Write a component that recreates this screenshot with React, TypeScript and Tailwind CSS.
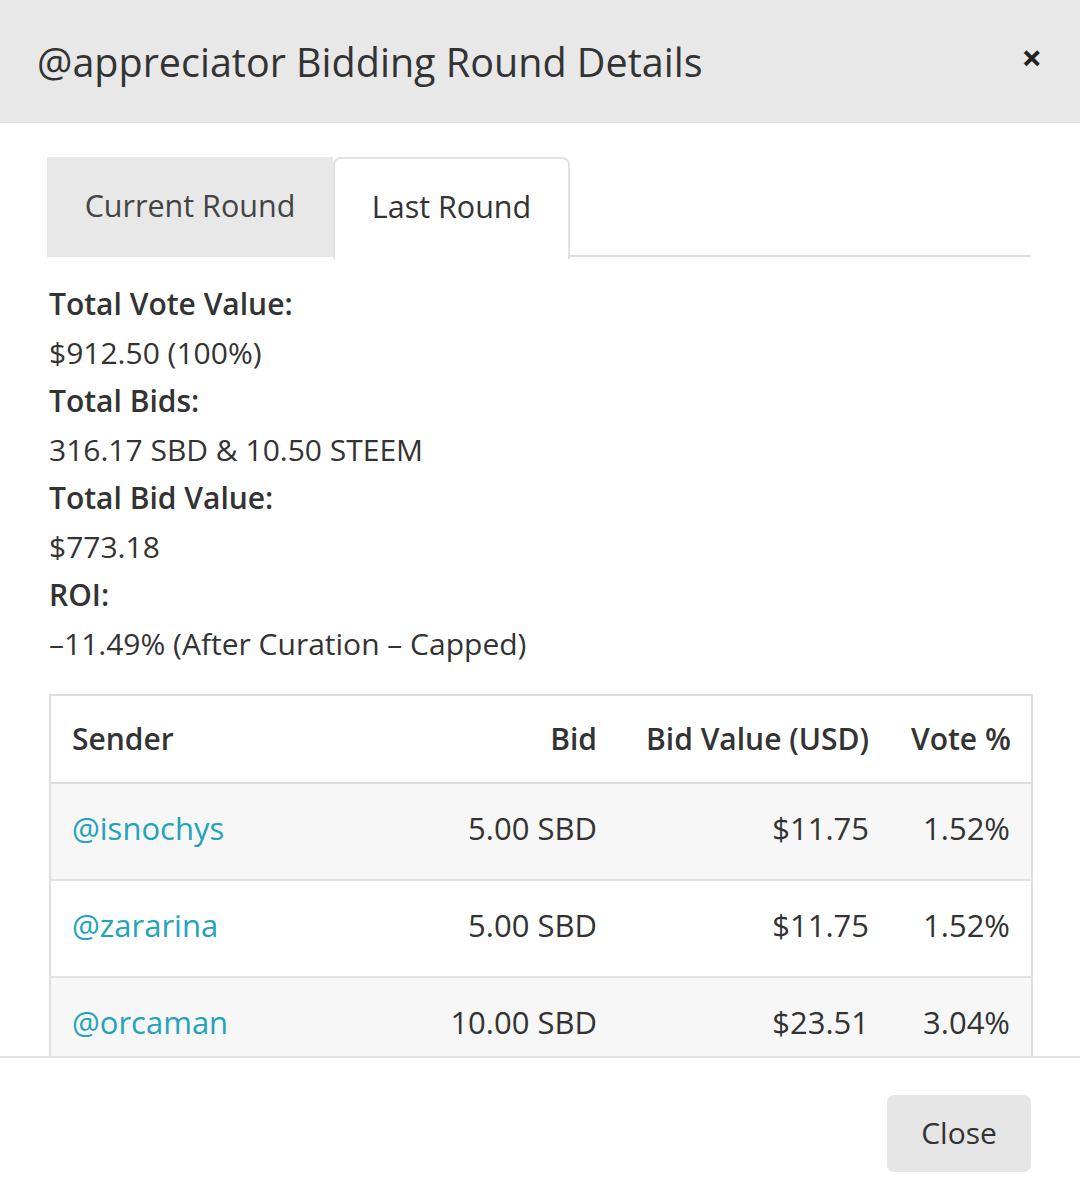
export default function App() {
  const rows = [
    { sender: '@isnochys', bid: '5.00 SBD', value: '$11.75', vote: '1.52%' },
    { sender: '@zararina', bid: '5.00 SBD', value: '$11.75', vote: '1.52%' },
    { sender: '@orcaman', bid: '10.00 SBD', value: '$23.51', vote: '3.04%' },
  ];

  const stats = [
    { label: 'Total Vote Value:', value: '$912.50 (100%)' },
    { label: 'Total Bids:', value: '316.17 SBD & 10.50 STEEM' },
    { label: 'Total Bid Value:', value: '$773.18' },
    { label: 'ROI:', value: '–11.49% (After Curation – Capped)' },
  ];

  return (
    <div className="w-[1080px] h-[1204px] flex flex-col bg-white overflow-hidden font-['Open_Sans',sans-serif] text-[#333]">
      {/* Header */}
      <div className="h-[123px] shrink-0 bg-[#e8e8e8] border-b border-[#dcdcdc] flex items-center justify-between pl-[37px] pr-[38px]">
        <h4 className="text-[39.5px] leading-none font-normal text-[#333] mt-[3px]">@appreciator Bidding Round Details</h4>
        <span className="text-[36px] font-bold leading-none text-[#222] -mt-[6px]">×</span>
      </div>

      {/* Body */}
      <div className="flex-1 overflow-hidden pl-[47px] pr-[49px] pt-[34px]">
        <div className="flex border-b-2 border-[#dedede] h-[100px]">
          <div className="w-[286px] h-[100px] bg-[#e8e8e8] flex items-center justify-center text-[30.5px] text-[#444] pb-[3px]">
            Current Round
          </div>
          <div className="w-[237px] h-[102px] bg-white border-2 border-b-0 border-[#e2e2e2] rounded-t-[8px] flex items-center justify-center text-[30.5px] text-[#333] pb-[5px]">
            Last Round
          </div>
        </div>

        <div className="pt-[23px] pl-[2px] text-[30px] leading-[48.5px]">
          {stats.map((s) => (
            <div key={s.label}>
              <div className="font-semibold">{s.label}</div>
              <div>{s.value}</div>
            </div>
          ))}
        </div>

        <table className="mt-[26px] ml-[2px] w-[982px] border-collapse border-2 border-[#dedede] text-[30px] table-fixed">
          <colgroup>
            <col className="w-[335px]" />
            <col className="w-[233px]" />
            <col className="w-[272px]" />
            <col className="w-[142px]" />
          </colgroup>
          <thead>
            <tr className="h-[88px] border-b-2 border-[#dedede]">
              <th className="text-left font-semibold px-[21px] pb-[2px] whitespace-nowrap">Sender</th>
              <th className="text-right font-semibold px-[21px] pb-[2px] whitespace-nowrap">Bid</th>
              <th className="text-right font-semibold px-[21px] pb-[2px] whitespace-nowrap">Bid Value (USD)</th>
              <th className="text-right font-semibold px-[21px] pb-[2px] whitespace-nowrap">Vote %</th>
            </tr>
          </thead>
          <tbody>
            {rows.map((r, i) => (
              <tr key={r.sender} className={`h-[97px] border-b-2 border-[#e2e2e2] ${i % 2 === 0 ? 'bg-[#f7f7f7]' : 'bg-white'}`}>
                <td className="px-[21px] pb-[7px] text-[#23a3bb] text-[31px]">{r.sender}</td>
                <td className="px-[21px] pb-[7px] text-right text-[31px] whitespace-nowrap">{r.bid}</td>
                <td className="px-[21px] pb-[7px] text-right text-[31px]">{r.value}</td>
                <td className="px-[21px] pb-[7px] text-right text-[31px]">{r.vote}</td>
              </tr>
            ))}
          </tbody>
        </table>
      </div>

      {/* Footer */}
      <div className="h-[148px] shrink-0 border-t-2 border-[#e2e2e2] flex justify-end items-start pt-[37px] pr-[49px]">
        <button className="w-[144px] h-[77px] rounded-[7px] bg-[#e6e6e6] text-[30px] text-[#333] pb-[3px]">Close</button>
      </div>
    </div>
  );
}
